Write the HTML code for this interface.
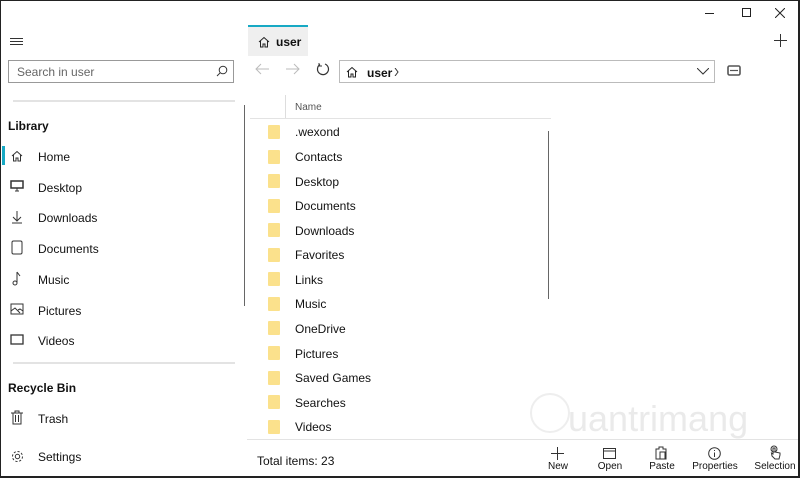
<!DOCTYPE html>
<html><head><meta charset="utf-8"><style>
*{margin:0;padding:0;box-sizing:border-box}
body{width:800px;height:478px;overflow:hidden;background:#fff;font-family:"Liberation Sans",sans-serif;color:#111;position:relative}
.frame{position:absolute;left:0;top:0;width:800px;height:478px;border:1px solid #222;border-width:1px 2px 2px 1px;z-index:5}
.a{position:absolute}
.t{font-size:12px;position:absolute}
.nav{font-size:12px;position:absolute;left:38px}
.ic{position:absolute;left:10px}
.fold{position:absolute;left:268px;width:12px;height:14px;background:#fbe18c;border-radius:1px}
.fn{position:absolute;left:295px;font-size:12px}
.bb{position:absolute;font-size:10px;text-align:center;width:60px}
</style></head><body>
<div class="frame"></div>
<div class="a" style="left:705px;top:13px;width:9px;height:1px;background:#222"></div>
<div class="a" style="left:742px;top:8px;width:9px;height:9px;border:1px solid #222"></div>
<svg class="a" style="left:775px;top:8px" width="10" height="10"><path d="M0 0L10 10M10 0L0 10" stroke="#222" stroke-width="1"/></svg>
<svg class="a" style="left:774px;top:34px" width="13" height="13"><path d="M6.5 0V13M0 6.5H13" stroke="#333" stroke-width="1"/></svg>
<div class="a" style="left:10px;top:38px;width:13px;height:7px;border-top:1px solid #333;border-bottom:1px solid #333"></div>
<div class="a" style="left:10px;top:41px;width:13px;height:1px;background:#333"></div>
<div class="a" style="left:8px;top:60px;width:226px;height:23px;border:1px solid #999"></div>
<div class="t" style="left:17px;top:65px;color:#666">Search in user</div>
<svg class="a" style="left:216px;top:65px" width="12" height="12"><circle cx="7" cy="5" r="3.8" fill="none" stroke="#333"/><path d="M4.3 7.7L1 11" stroke="#333"/></svg>
<div class="a" style="left:13px;top:100px;width:222px;height:2px;background:#e3e3e3"></div>
<div class="t" style="left:8px;top:119px;font-weight:bold">Library</div>
<div class="a" style="left:2px;top:146px;width:3px;height:19px;background:#17a9c4"></div>
<svg class="ic" style="top:149px" width="14" height="14"><path d="M2 7L7 2.5L12 7M3.5 6V12H6V9H8V12H10.5V6" fill="none" stroke="#333"/></svg>
<div class="nav" style="top:150px">Home</div>
<svg class="ic" style="top:180px" width="14" height="13"><rect x="1" y="1" width="12" height="7" fill="none" stroke="#333" stroke-width="1.5"/><path d="M5 11H9M7 8V11" stroke="#333"/></svg>
<div class="nav" style="top:181px">Desktop</div>
<svg class="ic" style="top:210px" width="14" height="14"><path d="M7 1V11M3 7L7 11L11 7M2 13H12" fill="none" stroke="#333"/></svg>
<div class="nav" style="top:211px">Downloads</div>
<svg class="ic" style="top:240px" width="14" height="15"><rect x="2" y="1" width="10" height="13" rx="1.5" fill="none" stroke="#333"/></svg>
<div class="nav" style="top:242px">Documents</div>
<svg class="ic" style="top:271px" width="14" height="15"><path d="M7 1V11.5M7 1L10 5" fill="none" stroke="#333"/><circle cx="5" cy="12" r="2" fill="none" stroke="#333"/></svg>
<div class="nav" style="top:273px">Music</div>
<svg class="ic" style="top:303px" width="14" height="13"><rect x="1" y="1" width="12" height="10" fill="none" stroke="#333"/><path d="M1 8L5 5L10 10M8 7L10 6L13 8" fill="none" stroke="#333"/></svg>
<div class="nav" style="top:304px">Pictures</div>
<svg class="ic" style="top:334px" width="14" height="12"><rect x="1" y="1" width="12" height="9" fill="none" stroke="#333" stroke-width="1.3"/></svg>
<div class="nav" style="top:334px">Videos</div>
<div class="a" style="left:13px;top:362px;width:222px;height:2px;background:#e3e3e3"></div>
<div class="t" style="left:8px;top:381px;font-weight:bold">Recycle Bin</div>
<svg class="ic" style="top:410px" width="14" height="15"><path d="M1 3H13M5 3V1H9V3M3 3V14H11V3M5.5 5V12M8.5 5V12" fill="none" stroke="#333"/></svg>
<div class="nav" style="top:412px">Trash</div>
<svg class="ic" style="top:449px" width="15" height="15"><circle cx="7.5" cy="7.5" r="2.2" fill="none" stroke="#333"/><circle cx="7.5" cy="7.5" r="5" fill="none" stroke="#333" stroke-dasharray="2.2 1.7"/></svg>
<div class="nav" style="top:450px">Settings</div>
<div class="a" style="left:244px;top:105px;width:1px;height:201px;background:#666"></div>
<div class="a" style="left:248px;top:25px;width:60px;height:31px;background:#efefef;border-top:2px solid #17a9c4"></div>
<svg class="a" style="left:257px;top:35px" width="14" height="14"><path d="M2 7L7 2.5L12 7M3.5 6V12H6V9H8V12H10.5V6" fill="none" stroke="#222"/></svg>
<div class="t" style="left:276px;top:35px;font-weight:bold">user</div>
<svg class="a" style="left:255px;top:63px" width="14" height="12"><path d="M1 6H14M6 1L1 6L6 11" fill="none" stroke="#bbb"/></svg>
<svg class="a" style="left:286px;top:63px" width="14" height="12"><path d="M0 6H13M8 1L13 6L8 11" fill="none" stroke="#bbb"/></svg>
<svg class="a" style="left:316px;top:62px" width="14" height="14"><path d="M4 2.5A5.5 5.5 0 1 0 9 2" fill="none" stroke="#333" stroke-width="1.2"/><path d="M3 1V4H6" fill="none" stroke="#333"/></svg>
<div class="a" style="left:339px;top:60px;width:376px;height:23px;border:1px solid #bbb"></div>
<svg class="a" style="left:345px;top:65px" width="14" height="14"><path d="M2 7L7 2.5L12 7M3.5 6V12H6V9H8V12H10.5V6" fill="none" stroke="#222"/></svg>
<div class="t" style="left:367px;top:66px;font-weight:bold">user</div>
<svg class="a" style="left:394px;top:68px" width="5" height="8"><path d="M1 0L4 4L1 8" fill="none" stroke="#333"/></svg>
<svg class="a" style="left:697px;top:68px" width="12" height="7"><path d="M0 0L6 6L12 0" fill="none" stroke="#333"/></svg>
<svg class="a" style="left:727px;top:65px" width="14" height="11"><rect x="1" y="1" width="12" height="9" rx="1.5" fill="none" stroke="#555" stroke-width="1.6"/><path d="M3 5.5H11" stroke="#555" stroke-width="1.2"/></svg>
<div class="a" style="left:285px;top:95px;width:1px;height:23px;background:#ddd"></div>
<div class="a" style="left:250px;top:118px;width:301px;height:1px;background:#e3e3e3"></div>
<div class="a" style="left:295px;top:102px;font-size:10px;color:#555">Name</div>
<div class="a" style="left:548px;top:131px;width:1px;height:168px;background:#666"></div>
<div class="fold" style="top:125px"></div><div class="fn" style="top:125px">.wexond</div>
<div class="fold" style="top:150px"></div><div class="fn" style="top:150px">Contacts</div>
<div class="fold" style="top:174px"></div><div class="fn" style="top:175px">Desktop</div>
<div class="fold" style="top:199px"></div><div class="fn" style="top:199px">Documents</div>
<div class="fold" style="top:223px"></div><div class="fn" style="top:224px">Downloads</div>
<div class="fold" style="top:248px"></div><div class="fn" style="top:248px">Favorites</div>
<div class="fold" style="top:272px"></div><div class="fn" style="top:273px">Links</div>
<div class="fold" style="top:297px"></div><div class="fn" style="top:297px">Music</div>
<div class="fold" style="top:321px"></div><div class="fn" style="top:322px">OneDrive</div>
<div class="fold" style="top:346px"></div><div class="fn" style="top:347px">Pictures</div>
<div class="fold" style="top:371px"></div><div class="fn" style="top:371px">Saved Games</div>
<div class="fold" style="top:395px"></div><div class="fn" style="top:396px">Searches</div>
<div class="fold" style="top:420px"></div><div class="fn" style="top:420px">Videos</div>
<div class="a" style="left:530px;top:393px;width:40px;height:40px;border:2px solid #eee;border-radius:50%"></div>
<div class="a" style="left:568px;top:398px;font-size:36px;color:#eaeaea">uantrimang</div>
<div class="a" style="left:247px;top:439px;width:551px;height:1px;background:#e3e3e3"></div>
<div class="t" style="left:257px;top:454px">Total items: 23</div>
<svg class="a" style="left:551px;top:447px" width="13" height="13"><path d="M6.5 0V13M0 6.5H13" stroke="#333"/></svg>
<div class="bb" style="left:528px;top:461px">New</div>
<svg class="a" style="left:603px;top:448px" width="13" height="11"><rect x="0.5" y="0.5" width="12" height="10" fill="none" stroke="#333"/><path d="M0.5 3H12.5" stroke="#333"/></svg>
<div class="bb" style="left:580px;top:461px">Open</div>
<svg class="a" style="left:655px;top:446px" width="12" height="14"><path d="M1 3H4V1H8V3H11V13H1Z" fill="none" stroke="#333"/><rect x="5" y="6" width="5" height="7" fill="none" stroke="#333"/></svg>
<div class="bb" style="left:632px;top:461px">Paste</div>
<svg class="a" style="left:708px;top:447px" width="13" height="13"><circle cx="6.5" cy="6.5" r="5.8" fill="none" stroke="#333"/><path d="M6.5 5.5V10M6.5 3V4" stroke="#333"/></svg>
<div class="bb" style="left:685px;top:461px">Properties</div>
<svg class="a" style="left:769px;top:445px" width="12" height="15"><circle cx="5" cy="4" r="3" fill="none" stroke="#333"/><path d="M4 3V9L2.5 8L3 11L6 14H10L11 10V8L6 7V3Z" fill="none" stroke="#333"/></svg>
<div class="bb" style="left:745px;top:461px">Selection</div>
</body></html>
